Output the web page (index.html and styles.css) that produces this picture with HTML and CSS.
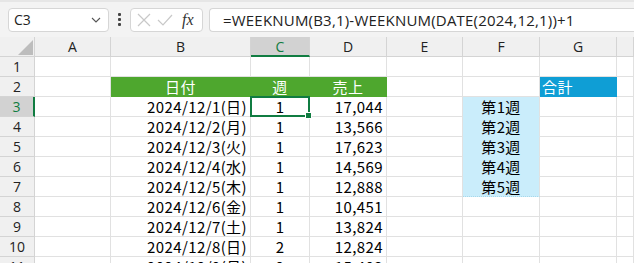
FILE: index.html
```html
<!DOCTYPE html>
<html lang="ja">
<head>
    <meta charset="UTF-8">
    <title>WEEKNUM</title>
    <link rel="stylesheet" href="styles.css">
</head>
<body>
    <div class="toolbar">
        <div class="namebox">
            <span>C3</span>
            <svg class="chev" width="10" height="6" viewBox="0 0 10 6"><path d="M1 1 L5 5 L9 1" fill="none" stroke="#555" stroke-width="1.1"/></svg>
        </div>
        <div class="dots"><i></i><i></i><i></i></div>
        <div class="fxbox">
            <svg width="16" height="16" viewBox="0 0 16 16"><path d="M2 2 L14 14 M14 2 L2 14" stroke="#c8c8c8" stroke-width="1.2"/></svg>
            <svg width="18" height="16" viewBox="0 0 18 16"><path d="M2 8 L7 13 L16 3" fill="none" stroke="#c8c8c8" stroke-width="1.2"/></svg>
            <span class="fx">fx</span>
        </div>
        <div class="formula">=WEEKNUM(B3,1)-WEEKNUM(DATE(2024,12,1))+1</div>
    </div>

    <div class="sheet">
        <div class="corner"><svg width="20" height="20" viewBox="0 0 20 20"><path d="M19 4 L19 19 L4 19 Z" fill="#bdbdbd"/></svg></div>
        <div class="colhead">A</div>
        <div class="colhead">B</div>
        <div class="colhead sel">C</div>
        <div class="colhead">D</div>
        <div class="colhead">E</div>
        <div class="colhead">F</div>
        <div class="colhead">G</div>
        <div class="colhead"></div>

        <div class="rowhead">1</div>
        <div class="cell"></div><div class="cell"></div><div class="cell"></div><div class="cell"></div>
        <div class="cell"></div><div class="cell"></div><div class="cell"></div><div class="cell"></div>

        <div class="rowhead">2</div>
        <div class="cell"></div>
        <div class="cell green">日付</div>
        <div class="cell green">週</div>
        <div class="cell green">売上</div>
        <div class="cell"></div>
        <div class="cell"></div>
        <div class="cell blue">合計</div>
        <div class="cell"></div>

        <div class="rowhead sel">3</div>
        <div class="cell"></div>
        <div class="cell right">2024/12/1(日)</div>
        <div class="cell center active">1<span class="handle"></span></div>
        <div class="cell right">17,044</div>
        <div class="cell"></div>
        <div class="cell center light">第1週</div>
        <div class="cell"></div><div class="cell"></div>

        <div class="rowhead">4</div>
        <div class="cell"></div>
        <div class="cell right">2024/12/2(月)</div>
        <div class="cell center">1</div>
        <div class="cell right">13,566</div>
        <div class="cell"></div>
        <div class="cell center light">第2週</div>
        <div class="cell"></div><div class="cell"></div>

        <div class="rowhead">5</div>
        <div class="cell"></div>
        <div class="cell right">2024/12/3(火)</div>
        <div class="cell center">1</div>
        <div class="cell right">17,623</div>
        <div class="cell"></div>
        <div class="cell center light">第3週</div>
        <div class="cell"></div><div class="cell"></div>

        <div class="rowhead">6</div>
        <div class="cell"></div>
        <div class="cell right">2024/12/4(水)</div>
        <div class="cell center">1</div>
        <div class="cell right">14,569</div>
        <div class="cell"></div>
        <div class="cell center light">第4週</div>
        <div class="cell"></div><div class="cell"></div>

        <div class="rowhead">7</div>
        <div class="cell"></div>
        <div class="cell right">2024/12/5(木)</div>
        <div class="cell center">1</div>
        <div class="cell right">12,888</div>
        <div class="cell"></div>
        <div class="cell center light last">第5週</div>
        <div class="cell"></div><div class="cell"></div>

        <div class="rowhead">8</div>
        <div class="cell"></div>
        <div class="cell right">2024/12/6(金)</div>
        <div class="cell center">1</div>
        <div class="cell right">10,451</div>
        <div class="cell"></div><div class="cell"></div><div class="cell"></div><div class="cell"></div>

        <div class="rowhead">9</div>
        <div class="cell"></div>
        <div class="cell right">2024/12/7(土)</div>
        <div class="cell center">1</div>
        <div class="cell right">13,824</div>
        <div class="cell"></div><div class="cell"></div><div class="cell"></div><div class="cell"></div>

        <div class="rowhead">10</div>
        <div class="cell"></div>
        <div class="cell right">2024/12/8(日)</div>
        <div class="cell center">2</div>
        <div class="cell right">12,824</div>
        <div class="cell"></div><div class="cell"></div><div class="cell"></div><div class="cell"></div>

        <div class="rowhead">11</div>
        <div class="cell"></div>
        <div class="cell right">2024/12/9(月)</div>
        <div class="cell center">2</div>
        <div class="cell right">15,403</div>
        <div class="cell"></div><div class="cell"></div><div class="cell"></div><div class="cell"></div>
    </div>
</body>
</html>
```

FILE: styles.css
```css
body {
    margin: 0;
    width: 634px;
    height: 263px;
    overflow: hidden;
    background: #fff;
    font-family: "Noto Sans CJK JP", "Noto Sans", sans-serif;
    color: #000;
}
.toolbar {
    height: 37px;
    background: #f3f3f3;
    display: flex;
    align-items: center;
    box-sizing: border-box;
    padding: 0 0 0 8px;
    border-top: 2px solid #e6e6e6;
}
.namebox {
    width: 101px;
    height: 24px;
    box-sizing: border-box;
    background: #fff;
    border: 1px solid #d6d6d6;
    border-radius: 4px;
    display: flex;
    align-items: center;
    justify-content: space-between;
    padding: 0 7px 0 5px;
    font-family: "Open Sans", "Liberation Sans", sans-serif;
    font-size: 14px;
    color: #222;
}
.dots {
    width: 21px;
    display: flex;
    flex-direction: column;
    align-items: center;
    gap: 2px;
}
.dots i {
    width: 3px;
    height: 3px;
    background: #444;
    border-radius: 1px;
}
.fxbox {
    width: 73px;
    height: 24px;
    box-sizing: border-box;
    background: #fff;
    border: 1px solid #d6d6d6;
    border-radius: 4px;
    display: flex;
    align-items: center;
    padding: 0 4px 0 5px;
    gap: 4px;
}
.fx {
    font-family: "Liberation Serif", serif;
    font-style: italic;
    font-size: 16px;
    color: #333;
    margin-left: 4px;
}
.formula {
    flex: 1;
    height: 24px;
    margin-left: 6px;
    box-sizing: border-box;
    background: #fff;
    border: 1px solid #d6d6d6;
    border-right: none;
    border-radius: 4px 0 0 4px;
    padding-left: 13px;
    font-family: "Open Sans", "Liberation Sans", sans-serif;
    font-size: 15px;
    letter-spacing: 0.2px;
    line-height: 22px;
    color: #222;
    white-space: nowrap;
}
.sheet {
    display: grid;
    grid-template-columns: 35px 76px 140px 59px 77px 76px 77px 77px 1fr;
    grid-auto-rows: 20px;
    font-size: 15px;
}
.sheet > div {
    box-sizing: border-box;
    border-right: 1px solid #e1e1e1;
    border-bottom: 1px solid #e1e1e1;
    line-height: 19px;
    white-space: nowrap;
    overflow: hidden;
}
.cell {
    letter-spacing: 0.4px;
}
.corner {
    background: #f0f0f0;
    display: flex;
    align-items: flex-end;
    justify-content: flex-end;
}
.colhead, .rowhead {
    background: #f0f0f0;
    color: #222;
    text-align: center;
    font-family: "Open Sans", "Liberation Sans", sans-serif;
    font-size: 14px;
}
.sheet > .colhead, .sheet > .corner {
    border-color: #d4d4d4;
}
.sheet > .rowhead {
    border-color: #d4d4d4;
}
.sheet > .colhead.sel {
    background: #d2d2d2;
    color: #107c41;
    border-bottom: 2px solid #107c41;
}
.sheet > .rowhead.sel {
    background: #d2d2d2;
    color: #107c41;
    border-right: 2px solid #107c41;
}
.right {
    text-align: right;
    padding-right: 3px;
}
.center {
    text-align: center;
}
.sheet > .green {
    background: #4ea72e;
    color: #fff;
    text-align: center;
    border-color: #4ea72e;
}
.sheet > .blue {
    background: #0f9ed5;
    color: #fff;
    padding-left: 2px;
    border-color: #0f9ed5;
}
.sheet > .light {
    background: #caedfb;
    border-bottom-color: #caedfb;
}
.sheet > .light.last {
    border-bottom: 1px dotted #a8d8ea;
}
.sheet > .active {
    position: relative;
    overflow: visible;
    border: 2px solid #107c41;
    margin: -1px 0 0 -1px;
    line-height: 17px;
}
.handle {
    position: absolute;
    right: -4px;
    bottom: -4px;
    width: 5px;
    height: 5px;
    background: #107c41;
    border: 1px solid #fff;
}
```
